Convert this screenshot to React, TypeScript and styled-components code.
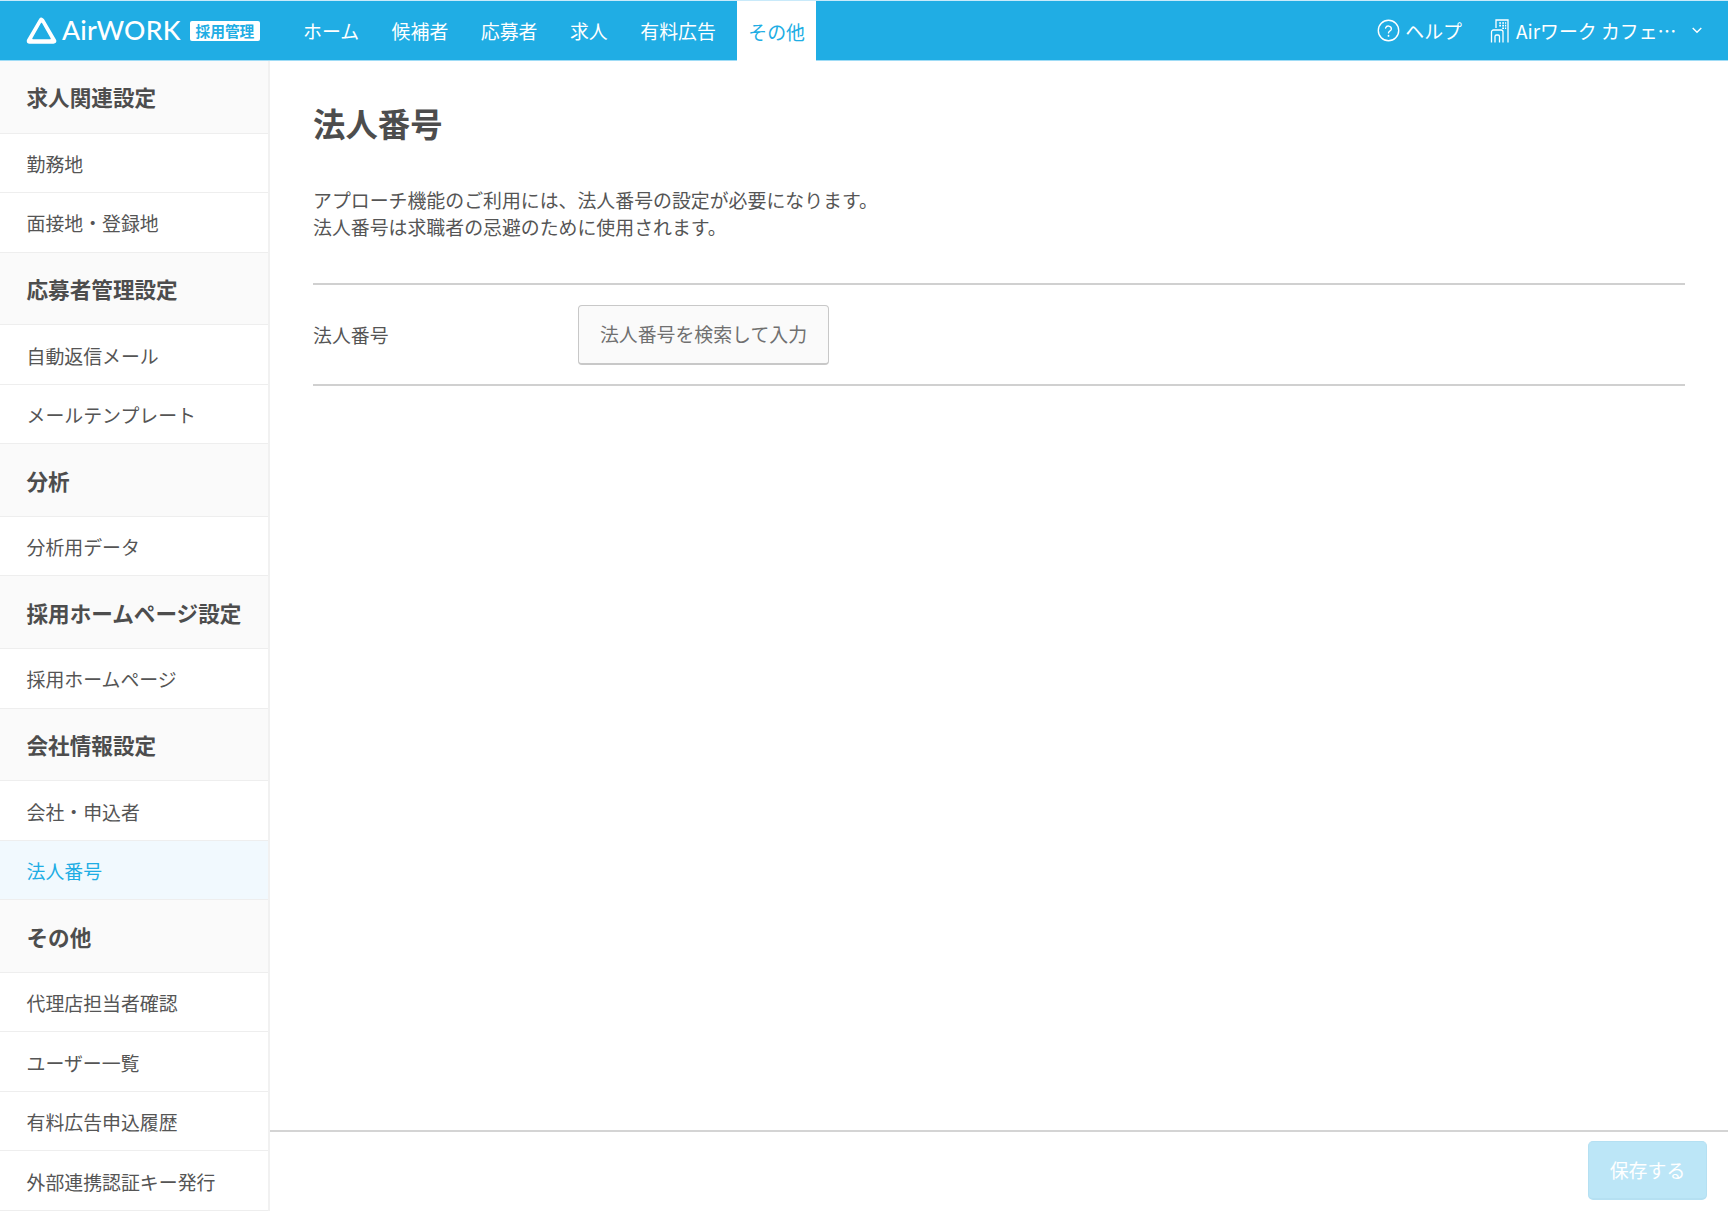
import React from "react";
import styled, { createGlobalStyle } from "styled-components";

const Global = createGlobalStyle`
  html, body { margin: 0; padding: 0; height: 100%; overflow: hidden; background: #fff; }
  body { font-family: "Noto Sans CJK JP", "Noto Sans", sans-serif; color: #555; }
  #root { height: 100%; }
`;

const Page = styled.div`
  height: 1211px;
  display: flex;
  flex-direction: column;
`;
const Header = styled.header`
  height: 61px;
  box-sizing: border-box;
  flex: none;
  background: #20ade4;
  border-top: 1px solid #c9eafa;
  border-bottom: 1px solid #9fdcf6;
  display: flex;
  align-items: stretch;
  padding: 0 26px;
  color: #fff;
`;
const Logo = styled.div`
  display: flex;
  align-items: center;
  width: 266px;
  flex: none;
`;
const LogoWord = styled.span`
  font-family: "Lato", "Noto Sans", sans-serif;
  font-size: 26.6px;
  font-weight: 500;
  letter-spacing: 0.2px;
  margin-left: 5px;
  line-height: 1;
  width: 123px;
  white-space: nowrap;
`;
const LogoBadge = styled.span`
  background: #fff;
  color: #20ade4;
  font-size: 14.7px;
  font-weight: 700;
  line-height: 20px;
  height: 20px;
  padding: 0 5.5px;
  border-radius: 2px;
  margin-left: 5px;
  white-space: nowrap;
`;
const Nav = styled.nav`
  display: flex;
  align-items: stretch;
  gap: 10.5px;
`;
const NavItem = styled.a<{ $active?: boolean }>`
  display: flex;
  align-items: center;
  padding: 0 11px;
  font-size: 18.9px;
  white-space: nowrap;
  margin-bottom: ${(p) => (p.$active ? "-1px" : "0")};
  background: ${(p) => (p.$active ? "#fff" : "transparent")};
  color: ${(p) => (p.$active ? "#20ade4" : "#fff")};
`;
const HeaderRight = styled.div`
  margin-left: auto;
  display: flex;
  align-items: center;
  font-size: 18.9px;
`;
const HeaderLink = styled.span`
  display: flex;
  align-items: center;
  white-space: nowrap;
`;
const HelpLink = styled(HeaderLink)`
  gap: 5px;
  margin-right: 28px;
`;
const AccountLink = styled(HeaderLink)`
  gap: 6px;
`;
const AccountName = styled.span`
  width: 161px;
  white-space: nowrap;
`;
const Chevron = styled.svg`
  margin-left: 15px;
`;
const Body = styled.div`
  flex: 1;
  min-height: 0;
  display: flex;
`;
const Sidebar = styled.aside`
  width: 270px;
  flex: none;
  box-sizing: border-box;
  border-right: 2px solid #f1f1f1;
  display: flex;
  flex-direction: column;
`;
const SectionTitle = styled.div`
  height: 72.67px;
  box-sizing: border-box;
  background: #fafafa;
  border-bottom: 1px solid #eee;
  display: flex;
  align-items: center;
  padding-left: 26.5px;
  font-size: 21.6px;
  font-weight: 700;
  color: #4d4d4d;
  white-space: nowrap;
`;
const SideItem = styled.a<{ $active?: boolean }>`
  height: 59.5px;
  box-sizing: border-box;
  border-bottom: 1px solid #eee;
  display: flex;
  align-items: center;
  padding: 1px 0 0 26.5px;
  font-size: 18.9px;
  white-space: nowrap;
  background: ${(p) => (p.$active ? "#f1f9fe" : "#fff")};
  color: ${(p) => (p.$active ? "#20ade4" : "#555")};
`;
const Main = styled.main`
  flex: 1;
  min-width: 0;
  display: flex;
  flex-direction: column;
`;
const Content = styled.div`
  flex: 1;
  min-height: 0;
  padding: 38px 43px 0;
`;
const Title = styled.h1`
  margin: 0;
  font-size: 32.4px;
  font-weight: 700;
  line-height: 48px;
  color: #4d4d4d;
`;
const Lead = styled.p`
  margin: 40px 0 0;
  font-size: 18.9px;
  line-height: 26.6px;
  color: #555;
`;
const FormRow = styled.div`
  margin-top: 43px;
  height: 103px;
  box-sizing: border-box;
  border-top: 2px solid #d0d0d0;
  border-bottom: 2px solid #d0d0d0;
  display: flex;
  align-items: center;
`;
const FieldLabel = styled.div`
  width: 265px;
  flex: none;
  font-size: 18.9px;
`;
const GhostButton = styled.button`
  width: 251px;
  height: 60px;
  box-sizing: border-box;
  background: #fafafa;
  border: 1px solid #c8c8c8;
  border-bottom-width: 2px;
  border-radius: 4px;
  color: #707070;
  font-family: inherit;
  font-size: 18.9px;
  padding: 0 0 2px;
`;
const Footer = styled.footer`
  flex: none;
  height: 81px;
  box-sizing: border-box;
  border-top: 2px solid #d4d4d4;
  display: flex;
  align-items: flex-start;
  justify-content: flex-end;
  padding: 9px 21px 0 0;
`;
const SaveButton = styled.button`
  width: 119px;
  height: 59px;
  box-sizing: border-box;
  background: #bce6f7;
  border: 1px solid #b5e0f2;
  border-bottom-width: 2px;
  border-radius: 5px;
  color: #fff;
  font-family: inherit;
  font-size: 18.9px;
  padding: 0 0 2px;
`;

const menu: { title: string; items: string[] }[] = [
  { title: "求人関連設定", items: ["勤務地", "面接地・登録地"] },
  { title: "応募者管理設定", items: ["自動返信メール", "メールテンプレート"] },
  { title: "分析", items: ["分析用データ"] },
  { title: "採用ホームページ設定", items: ["採用ホームページ"] },
  { title: "会社情報設定", items: ["会社・申込者", "法人番号"] },
  { title: "その他", items: ["代理店担当者確認", "ユーザー一覧", "有料広告申込履歴", "外部連携認証キー発行"] },
];

const navItems = ["ホーム", "候補者", "応募者", "求人", "有料広告"];

export default function App() {
  return (
    <Page>
      <Global />
      <Header>
        <Logo>
          <svg width="31" height="29" viewBox="0 0 31 29" fill="none">
            <path d="M15.5 4.5 L27.5 25 H3.5 Z" fill="none" stroke="#fff" strokeWidth="5.5" strokeLinejoin="round" />
            <path d="M15.5 7.5 L24 22.5 H7 Z" fill="#20ade4" stroke="#20ade4" strokeWidth="1.5" strokeLinejoin="round" />
          </svg>
          <LogoWord>AirWORK</LogoWord>
          <LogoBadge>採用管理</LogoBadge>
        </Logo>
        <Nav>
          {navItems.map((n) => (
            <NavItem key={n}>{n}</NavItem>
          ))}
          <NavItem $active>その他</NavItem>
        </Nav>
        <HeaderRight>
          <HelpLink>
            <svg width="23" height="23" viewBox="0 0 23 23" fill="none" stroke="#fff" strokeWidth="1.4" strokeLinecap="round">
              <circle cx="11.5" cy="11.5" r="10.2" />
              <path d="M8.6 9a3 3 0 0 1 5.8 .9c0 1.9-2.9 2.3-2.9 4" />
              <path d="M11.5 16.6v.3" strokeWidth="1.7" />
            </svg>
            ヘルプ
          </HelpLink>
          <AccountLink>
            <svg width="20" height="24" viewBox="0 0 20 24" fill="none" stroke="#fff" strokeWidth="1.3">
              <path d="M6 9V1h12v22.5" />
              <path d="M1.5 23.5V13a2 2 0 0 1 2-2H11a2 2 0 0 1 2 2v10.5" />
              <path d="M5 23.5V17.5a1.5 1.5 0 0 1 1.5-1.5H8a1.5 1.5 0 0 1 1.5 1.5v6" />
              <path d="M9.2 4h1.8M12.2 4H14M15 4h1.2M9.2 6.6h1.8M12.2 6.6H14M15 6.6h1.2M12.2 9.2H14M15 9.2h1.2" strokeWidth="1.6" />
            </svg>
            <AccountName>Airワーク カフェ…</AccountName>
          </AccountLink>
          <Chevron width="10" height="7" viewBox="0 0 10 7" fill="none" stroke="#fff" strokeWidth="1.4">
            <path d="M.7 1l4.3 4.3L9.3 1" />
          </Chevron>
        </HeaderRight>
      </Header>
      <Body>
        <Sidebar>
          {menu.map((s) => (
            <React.Fragment key={s.title}>
              <SectionTitle>{s.title}</SectionTitle>
              {s.items.map((i) => (
                <SideItem key={i} $active={i === "法人番号"}>
                  {i}
                </SideItem>
              ))}
            </React.Fragment>
          ))}
        </Sidebar>
        <Main>
          <Content>
            <Title>法人番号</Title>
            <Lead>
              アプローチ機能のご利用には、法人番号の設定が必要になります。
              <br />
              法人番号は求職者の忌避のために使用されます。
            </Lead>
            <FormRow>
              <FieldLabel>法人番号</FieldLabel>
              <GhostButton>法人番号を検索して入力</GhostButton>
            </FormRow>
          </Content>
          <Footer>
            <SaveButton>保存する</SaveButton>
          </Footer>
        </Main>
      </Body>
    </Page>
  );
}
